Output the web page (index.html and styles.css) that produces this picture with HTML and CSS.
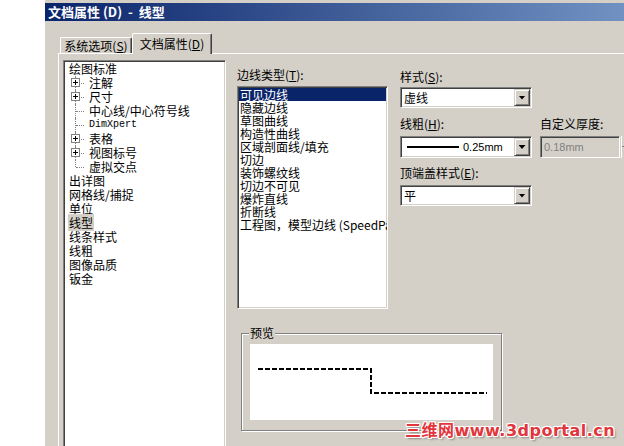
FILE: index.html
```html
<!DOCTYPE html>
<html lang="zh-CN">
<head>
  <meta charset="UTF-8">
  <title>文档属性 (D) - 线型</title>
  <link rel="stylesheet" href="styles.css">
</head>
<body>
  <div class="desk">
    <div class="window">
      <div class="titlebar">文档属性 (D)  -  线型</div>
      <div class="tabs">
        <div class="tab">系统选项(<u>S</u>)</div>
        <div class="tab active">文档属性(<u>D</u>)</div>
      </div>
      <div class="panel">
        <ul class="tree">
          <li>绘图标准
            <ul class="sub">
              <li><span class="box"></span>注解</li>
              <li><span class="box"></span>尺寸</li>
              <li>中心线/中心符号线</li>
              <li class="mono">DimXpert</li>
              <li><span class="box"></span>表格</li>
              <li><span class="box"></span>视图标号</li>
              <li>虚拟交点</li>
            </ul>
          </li>
          <li>出详图</li>
          <li>网格线/捕捉</li>
          <li>单位</li>
          <li><span class="current">线型</span></li>
          <li>线条样式</li>
          <li>线粗</li>
          <li>图像品质</li>
          <li>钣金</li>
        </ul>

        <div class="content">
          <div class="top-row">
            <div class="edge-col">
              <label>边线类型(<u>T</u>):</label>
              <div class="listbox">
                <div class="sel">可见边线</div>
                <div>隐藏边线</div>
                <div>草图曲线</div>
                <div>构造性曲线</div>
                <div>区域剖面线/填充</div>
                <div>切边</div>
                <div>装饰螺纹线</div>
                <div>切边不可见</div>
                <div>爆炸直线</div>
                <div>折断线</div>
                <div>工程图，模型边线 (SpeedPa</div>
              </div>
            </div>

            <div class="fields">
              <label>样式(<u>S</u>):</label>
              <div class="combo">
                <span class="val">虚线</span>
                <span class="btn"></span>
              </div>

              <div class="row">
                <div class="col">
                  <label>线粗(<u>H</u>):</label>
                  <div class="combo tall">
                    <span class="val"><span class="weight"></span><span class="num">0.25mm</span></span>
                    <span class="btn"></span>
                  </div>
                </div>
                <div class="col">
                  <label>自定义厚度:</label>
                  <div class="thick">
                    <span class="field">0.18mm</span>
                    <span class="spin"></span>
                  </div>
                </div>
              </div>

              <label class="cap">顶端盖样式(<u>E</u>):</label>
              <div class="combo">
                <span class="val">平</span>
                <span class="btn"></span>
              </div>
            </div>
          </div>

          <fieldset class="preview">
            <legend>预览</legend>
            <div class="preview-box">
              <svg width="243" height="76" viewBox="0 0 243 76">
                <polyline points="8,25 121,25 121,49 237,49" fill="none" stroke="#000" stroke-width="2" stroke-dasharray="5 2"/>
              </svg>
            </div>
          </fieldset>
        </div>
      </div>
    </div>
    <div class="watermark">三维网www.3dportal.cn</div>
  </div>
</body>
</html>
```

FILE: styles.css
```css
body {
  margin: 0;
  background: #fff;
  font: 12px/14px "Noto Sans CJK SC", sans-serif;
  color: #000;
  overflow: hidden;
  height: 446px;
}

.desk {
  position: relative;
  height: 446px;
}

.window {
  width: 579px;
  height: 443px;
  margin-left: 44px;
  padding-top: 3px;
  background: #d4d0c8;
  border-left: 1px solid #fff;
}

.titlebar {
  height: 18px;
  padding-left: 3px;
  background: linear-gradient(to right, #0a246a, #a6caf0 880px);
  color: #fff;
  font-weight: bold;
  font-size: 13px;
  line-height: 18px;
  white-space: pre;
}

/* tabs */
.tabs {
  position: relative;
  z-index: 1;
  display: flex;
  align-items: flex-end;
  height: 21px;
  margin-top: 12px;
  padding-left: 15px;
}

.tab {
  box-sizing: border-box;
  width: 72px;
  height: 16px;
  margin-bottom: 1px;
  border: 1px solid;
  border-color: #fff #404040 transparent #fff;
  border-bottom: none;
  border-radius: 2px 2px 0 0;
  box-shadow: inset -1px 0 #808080;
  background: #d4d0c8;
  text-align: center;
  line-height: 16px;
}

.tab.active {
  width: 80px;
  height: 21px;
  margin-bottom: 0;
  line-height: 19px;
}

.panel {
  display: flex;
  height: 400px;
  margin: -1px 0 0 13px;
  padding: 6px 0 0 4px;
  border-top: 1px solid #fff;
  border-left: 1px solid #fff;
}

.panel > *,
.top-row > *,
.row > * {
  flex: none;
}

/* sunken boxes */
.tree,
.listbox,
.combo,
.field {
  border: 1px solid;
  border-color: #808080 #fff #fff #808080;
  box-shadow: inset 1px 1px #404040, inset -1px -1px #d4d0c8;
}

/* tree */
.tree {
  box-sizing: border-box;
  width: 163px;
  height: 400px;
  margin: 0;
  padding: 1px 0 0 5px;
  list-style: none;
  background: #fff;
}

.tree li {
  line-height: 14px;
  white-space: nowrap;
}

.sub {
  margin: 0;
  padding: 0;
  list-style: none;
}

.sub li {
  position: relative;
  padding-left: 20px;
}

.sub li::before {
  content: "";
  position: absolute;
  left: 6px;
  top: 0;
  bottom: 0;
  border-left: 1px dotted #808080;
}

.sub li:last-child::before {
  bottom: 7px;
}

.sub li::after {
  content: "";
  position: absolute;
  left: 7px;
  top: 7px;
  width: 8px;
  border-top: 1px dotted #808080;
}

.box {
  position: absolute;
  z-index: 1;
  left: 2px;
  top: 2px;
  box-sizing: border-box;
  width: 9px;
  height: 9px;
  border: 1px solid #808080;
  background:
    linear-gradient(#000, #000) center / 5px 1px no-repeat,
    linear-gradient(#000, #000) center / 1px 5px no-repeat,
    #fff;
}

.mono {
  font-family: "Liberation Mono", monospace;
  font-size: 10px;
}

.current {
  padding: 0 1px;
  margin-left: -1px;
  background: #d4d0c8;
}

/* right side */
.content {
  margin: 8px 0 0 11px;
}

.top-row {
  display: flex;
}

label {
  display: block;
  line-height: 14px;
  white-space: nowrap;
}

.listbox {
  box-sizing: border-box;
  width: 151px;
  height: 223px;
  margin-top: 4px;
  padding: 1px;
  background: #fff;
  overflow: hidden;
}

.listbox div {
  height: 13px;
  line-height: 13px;
  padding-left: 1px;
  white-space: nowrap;
}

.listbox .sel {
  background: #0a246a;
  color: #fff;
}

.fields {
  margin-left: 12px;
  padding-top: 2px;
}

.combo {
  box-sizing: border-box;
  display: flex;
  width: 132px;
  height: 21px;
  margin-top: 3px;
  padding: 1px;
  background: #fff;
}

.combo .val {
  flex: 1;
  display: flex;
  align-items: center;
  padding-left: 2px;
}

.combo .btn {
  box-sizing: border-box;
  display: flex;
  align-items: center;
  justify-content: center;
  width: 16px;
  border: 1px solid;
  border-color: #d4d0c8 #404040 #404040 #d4d0c8;
  box-shadow: inset 1px 1px #fff, inset -1px -1px #808080;
  background: #d4d0c8;
}

.combo .btn::after {
  content: "";
  width: 7px;
  height: 4px;
  background: #000;
  clip-path: polygon(0 0, 100% 0, 50% 100%);
}

.row {
  display: flex;
  gap: 8px;
  margin-top: 9px;
}

.combo.tall {
  height: 22px;
  margin-top: 5px;
}

.weight {
  width: 52px;
  height: 2px;
  margin: 0 4px 0 3px;
  background: #000;
}

.num,
.field {
  font-family: "Liberation Sans", Arial, sans-serif;
  font-size: 11px;
}

.thick {
  display: flex;
  margin-top: 5px;
}

.field {
  box-sizing: border-box;
  width: 80px;
  height: 22px;
  padding: 0 3px;
  line-height: 20px;
  background: #d4d0c8;
  color: #808080;
}

.spin {
  width: 3px;
  height: 22px;
  margin-left: 1px;
  border-left: 1px solid #fff;
  box-shadow: inset 0 -11px #d4d0c8, inset 0 -12px #808080;
}

.cap {
  margin-top: 8px;
}

.fields .cap + .combo {
  margin-top: 5px;
}

/* preview */
.preview {
  width: 243px;
  margin: 17px 0 0 4px;
  padding: 4px 8px 10px;
  border: 1px solid #808080;
  box-shadow: inset 1px 1px #fff, 1px 1px #fff;
}

.preview legend {
  margin-left: -1px;
  padding: 0 1px;
  background: #d4d0c8;
  line-height: 14px;
}

.preview-box {
  width: 243px;
  height: 76px;
  background: #fff;
}

.preview-box svg {
  display: block;
}

.watermark {
  position: absolute;
  left: 405px;
  top: 422px;
  font: bold 16px/18px "DejaVu Sans", "Noto Sans CJK SC", sans-serif;
  letter-spacing: 0.5px;
  color: #e2353c;
  white-space: nowrap;
  text-shadow:
    1px 0 #fff, -1px 0 #fff, 0 1px #fff, 0 -1px #fff,
    1px 1px #fff, -1px -1px #fff, 1px -1px #fff, -1px 1px #fff,
    2px 2px 2px rgba(0, 0, 0, 0.35);
}
```
